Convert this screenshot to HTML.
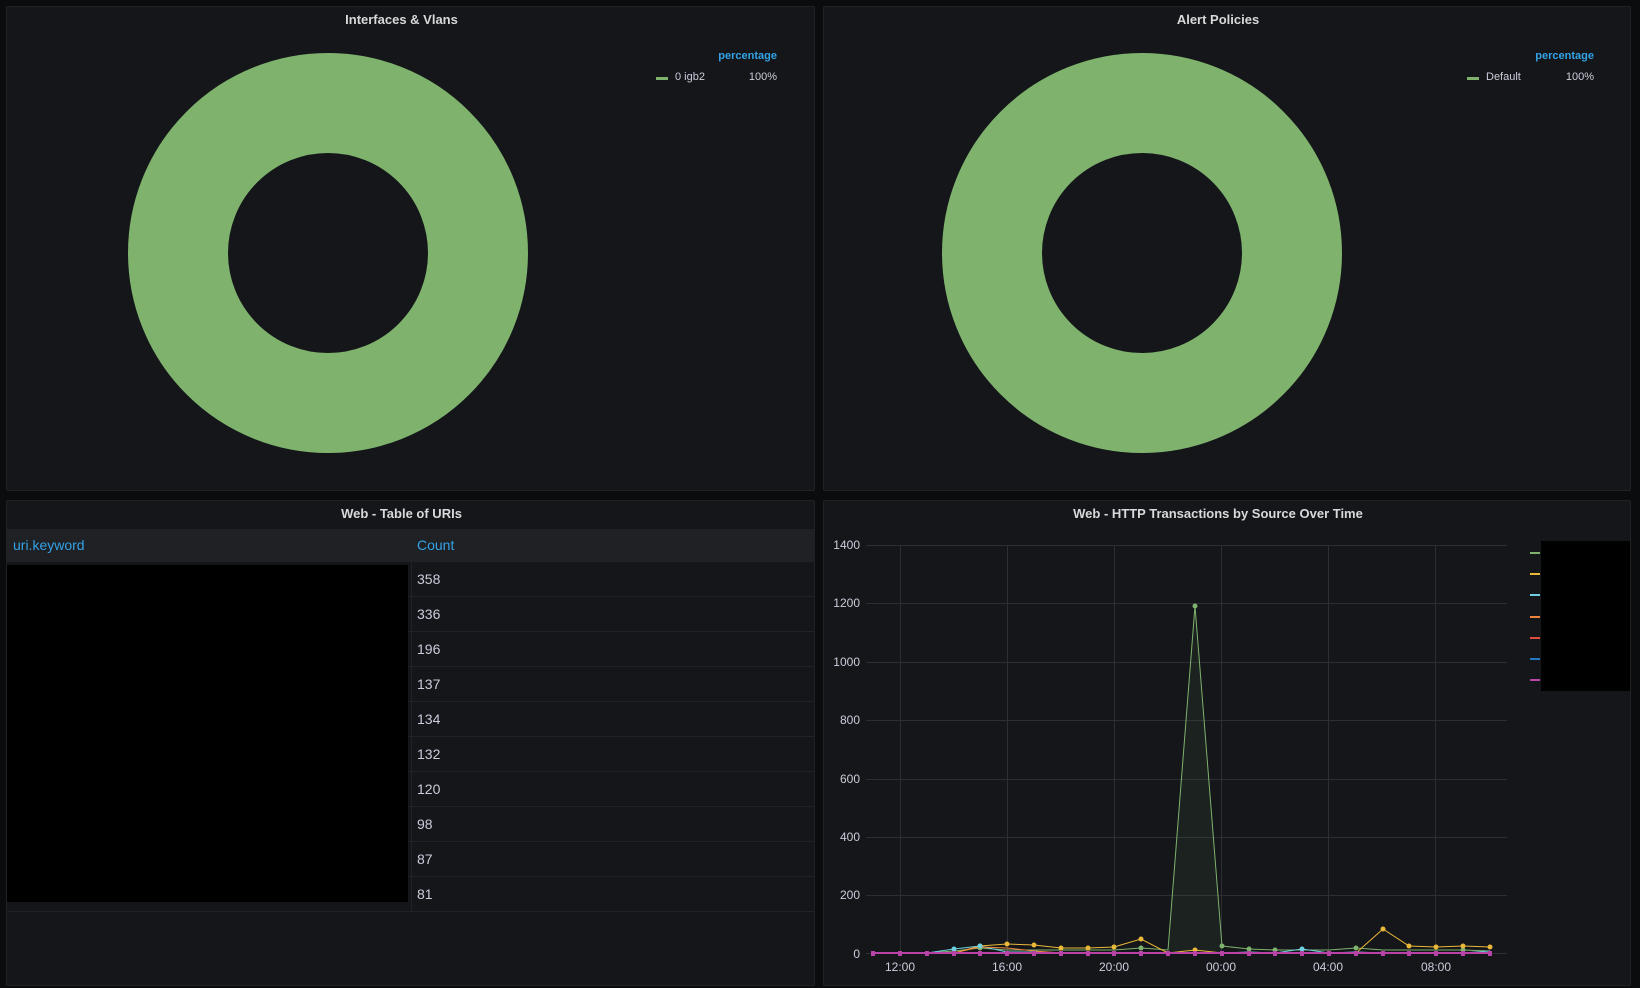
<!DOCTYPE html>
<html><head><meta charset="utf-8"><style>
*{margin:0;padding:0;box-sizing:border-box}
body{width:1640px;height:988px;background:#0b0c0e;font-family:"Liberation Sans",sans-serif;color:#ccccdc;position:relative;overflow:hidden}
.p{position:absolute;background:#141619;border:1px solid #202226;border-radius:2px}
.t{position:absolute;left:0;right:18px;top:5px;text-align:center;font-size:13px;font-weight:bold;color:#d8d9da}
.lg{position:absolute;font-size:11px}
.b{color:#33a2e5;font-weight:bold}
.row{position:absolute;left:0;right:0;height:35px;border-bottom:1px solid #202226;font-size:14px}
</style></head><body>
<div class="p" style="left:6px;top:6px;width:809px;height:485px">
<div class="t">Interfaces &amp; Vlans</div>
<svg style="position:absolute;left:0;top:0" width="809" height="485"><circle cx="321" cy="246" r="150" fill="none" stroke="#7eb26d" stroke-width="100"/></svg>
<div class="lg b" style="right:37px;top:43px">percentage</div>
<div style="position:absolute;left:649px;top:70px;width:12px;height:3px;background:#7eb26d"></div>
<div class="lg" style="left:668px;top:64px">0 igb2</div>
<div class="lg" style="right:37px;top:64px">100%</div>
</div>
<div class="p" style="left:823px;top:6px;width:808px;height:485px">
<div class="t">Alert Policies</div>
<svg style="position:absolute;left:0;top:0" width="808" height="485"><circle cx="318" cy="246" r="150" fill="none" stroke="#7eb26d" stroke-width="100"/></svg>
<div class="lg b" style="right:36px;top:43px">percentage</div>
<div style="position:absolute;left:643px;top:70px;width:12px;height:3px;background:#7eb26d"></div>
<div class="lg" style="left:662px;top:64px">Default</div>
<div class="lg" style="right:36px;top:64px">100%</div>
</div>
<div class="p" style="left:6px;top:500px;width:809px;height:486px">
<div class="t">Web - Table of URIs</div>
<div style="position:absolute;left:0;right:0;top:28px;height:33px;background:#1f2125;font-size:14px">
<span style="position:absolute;left:6px;top:8px;color:#33a2e5">uri.keyword</span>
<span style="position:absolute;left:410px;top:8px;color:#33a2e5">Count</span></div>
<div style="position:absolute;left:404px;top:28px;width:1px;height:383px;background:#202226"></div>
<div class="row" style="top:61px"><span style="position:absolute;left:410px;top:9px">358</span></div>
<div class="row" style="top:96px"><span style="position:absolute;left:410px;top:9px">336</span></div>
<div class="row" style="top:131px"><span style="position:absolute;left:410px;top:9px">196</span></div>
<div class="row" style="top:166px"><span style="position:absolute;left:410px;top:9px">137</span></div>
<div class="row" style="top:201px"><span style="position:absolute;left:410px;top:9px">134</span></div>
<div class="row" style="top:236px"><span style="position:absolute;left:410px;top:9px">132</span></div>
<div class="row" style="top:271px"><span style="position:absolute;left:410px;top:9px">120</span></div>
<div class="row" style="top:306px"><span style="position:absolute;left:410px;top:9px">98</span></div>
<div class="row" style="top:341px"><span style="position:absolute;left:410px;top:9px">87</span></div>
<div class="row" style="top:376px"><span style="position:absolute;left:410px;top:9px">81</span></div>
<div style="position:absolute;left:0;top:64px;width:401px;height:337px;background:#000"></div>
</div>
<div class="p" style="left:823px;top:500px;width:808px;height:486px">
<div class="t">Web - HTTP Transactions by Source Over Time</div>
</div>
<svg style="position:absolute;left:0;top:0" width="1640" height="988" font-family="Liberation Sans" font-size="12" fill="#ccccdc">
<g stroke="#2c2e33" stroke-width="1">
<line x1="866" y1="545.5" x2="1507" y2="545.5"/><line x1="866" y1="603.5" x2="1507" y2="603.5"/><line x1="866" y1="662.5" x2="1507" y2="662.5"/><line x1="866" y1="720.5" x2="1507" y2="720.5"/><line x1="866" y1="779.5" x2="1507" y2="779.5"/><line x1="866" y1="837.5" x2="1507" y2="837.5"/><line x1="866" y1="895.5" x2="1507" y2="895.5"/><line x1="866" y1="953.5" x2="1507" y2="953.5"/>
<line x1="900.5" y1="545" x2="900.5" y2="954"/><line x1="1007.5" y1="545" x2="1007.5" y2="954"/><line x1="1114.5" y1="545" x2="1114.5" y2="954"/><line x1="1221.5" y1="545" x2="1221.5" y2="954"/><line x1="1328.5" y1="545" x2="1328.5" y2="954"/><line x1="1435.5" y1="545" x2="1435.5" y2="954"/>
</g>
<g text-anchor="end"><text x="860" y="549">1400</text><text x="860" y="607">1200</text><text x="860" y="666">1000</text><text x="860" y="724">800</text><text x="860" y="783">600</text><text x="860" y="841">400</text><text x="860" y="899">200</text><text x="860" y="958">0</text></g>
<g text-anchor="middle"><text x="900" y="971">12:00</text><text x="1007" y="971">16:00</text><text x="1114" y="971">20:00</text><text x="1221" y="971">00:00</text><text x="1328" y="971">04:00</text><text x="1436" y="971">08:00</text></g>
<polygon points="1168,953 1195,606 1222,953" fill="#7eb26d" opacity="0.08"/>
<polyline fill="none" stroke="#7eb26d" stroke-width="1" points="873,953 900,953 927,953 954,951 980,948 1007,950 1034,950 1061,950 1088,950 1114,950 1141,948 1168,950 1195,606 1222,946 1249,949 1275,950 1302,950 1329,950 1356,948 1383,950 1409,950 1436,950 1463,950 1490,951"/>
<polyline fill="none" stroke="#eab839" stroke-width="1" points="873,953 900,953 927,953 954,953 980,946 1007,944 1034,945 1061,948 1088,948 1114,947 1141,939 1168,953 1195,950 1222,953 1249,953 1275,953 1302,953 1329,953 1356,953 1383,929 1409,946 1436,947 1463,946 1490,947"/>
<polyline fill="none" stroke="#6ed0e0" stroke-width="1" points="873,953 900,953 927,953 954,949 980,946 1007,952 1034,952 1061,953 1088,953 1114,953 1141,953 1168,953 1195,953 1222,953 1249,952 1275,953 1302,949 1329,953 1356,952 1383,953 1409,953 1436,953 1463,953 1490,951"/>
<polyline fill="none" stroke="#ef843c" stroke-width="1" points="873,953 900,953 927,953 954,953 980,947 1007,948 1034,951 1061,953 1088,953 1114,953 1141,953 1168,953 1195,953 1222,953 1249,953 1275,953 1302,953 1329,953 1356,953 1383,953 1409,953 1436,953 1463,953 1490,953"/>
<polyline fill="none" stroke="#ba43a9" stroke-width="2" points="873,953 1490,953"/>
<g fill="#7eb26d"><circle cx="980" cy="948" r="2.5"/><circle cx="1141" cy="948" r="2.5"/><circle cx="1195" cy="606" r="2.5"/><circle cx="1222" cy="946" r="2.5"/><circle cx="1249" cy="949" r="2.5"/><circle cx="1275" cy="950" r="2.5"/><circle cx="1356" cy="948" r="2.5"/><circle cx="1463" cy="950" r="2.5"/></g>
<g fill="#eab839"><circle cx="980" cy="946" r="2.5"/><circle cx="1007" cy="944" r="2.5"/><circle cx="1034" cy="945" r="2.5"/><circle cx="1061" cy="948" r="2.5"/><circle cx="1088" cy="948" r="2.5"/><circle cx="1114" cy="947" r="2.5"/><circle cx="1141" cy="939" r="2.5"/><circle cx="1195" cy="950" r="2.5"/><circle cx="1383" cy="929" r="2.5"/><circle cx="1409" cy="946" r="2.5"/><circle cx="1436" cy="947" r="2.5"/><circle cx="1463" cy="946" r="2.5"/><circle cx="1490" cy="947" r="2.5"/></g>
<g fill="#6ed0e0"><circle cx="954" cy="949" r="2.5"/><circle cx="980" cy="946" r="2.5"/><circle cx="1302" cy="949" r="2.5"/></g>
<g fill="#ba43a9">
<rect x="871" y="951" width="4" height="5"/><rect x="898" y="951" width="4" height="5"/><rect x="925" y="951" width="4" height="5"/><rect x="952" y="951" width="4" height="5"/><rect x="978" y="951" width="4" height="5"/><rect x="1005" y="951" width="4" height="5"/><rect x="1032" y="951" width="4" height="5"/><rect x="1059" y="951" width="4" height="5"/><rect x="1086" y="951" width="4" height="5"/><rect x="1112" y="951" width="4" height="5"/><rect x="1139" y="951" width="4" height="5"/><rect x="1166" y="951" width="4" height="5"/><rect x="1193" y="951" width="4" height="5"/><rect x="1220" y="951" width="4" height="5"/><rect x="1247" y="951" width="4" height="5"/><rect x="1273" y="951" width="4" height="5"/><rect x="1300" y="951" width="4" height="5"/><rect x="1327" y="951" width="4" height="5"/><rect x="1354" y="951" width="4" height="5"/><rect x="1381" y="951" width="4" height="5"/><rect x="1407" y="951" width="4" height="5"/><rect x="1434" y="951" width="4" height="5"/><rect x="1461" y="951" width="4" height="5"/><rect x="1488" y="951" width="4" height="5"/></g>
<rect x="1530" y="552" width="10" height="2" fill="#7eb26d"/><rect x="1530" y="573" width="10" height="2" fill="#eab839"/><rect x="1530" y="594" width="10" height="2" fill="#6ed0e0"/><rect x="1530" y="616" width="10" height="2" fill="#ef843c"/><rect x="1530" y="637" width="10" height="2" fill="#e24d42"/><rect x="1530" y="658" width="10" height="2" fill="#1f78c1"/><rect x="1530" y="679" width="10" height="2" fill="#ba43a9"/>
<rect x="1541" y="541" width="89" height="150" fill="#000"/>
</svg>
</body></html>
